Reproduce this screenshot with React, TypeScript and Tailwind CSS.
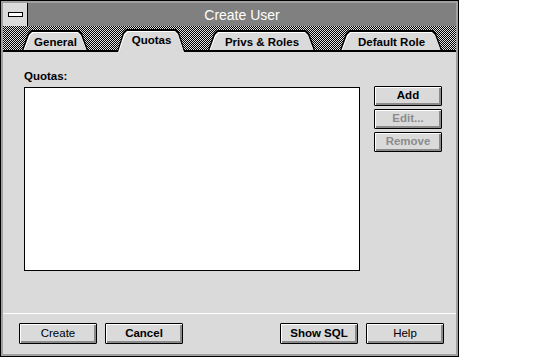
import React from "react";

const font = "[font-family:'Liberation_Sans',Arial,sans-serif]";

function Tab({ label, active = false, className = "" }: { label: string; active?: boolean; className?: string }) {
  // чёрный контур -> белая подсветка -> серая заливка, все три обрезаны трапецией
  return (
    <div
      className={`${active ? "h-[23px] -mb-[2px] z-10" : "h-[20px]"} relative flex flex-col bg-black px-[1px] pt-[2px] [clip-path:polygon(0_100%,6px_3px,9px_0,calc(100%_-_9px)_0,calc(100%_-_6px)_3px,100%_100%)] ${className}`}
    >
      <div className="flex flex-1 flex-col bg-white pl-[1px] pt-[1px] [clip-path:polygon(0_100%,6px_3px,9px_0,calc(100%_-_9px)_0,calc(100%_-_6px)_3px,100%_100%)]">
        <div
          className={`flex flex-1 items-center justify-center bg-[#dadada] text-[11.5px] font-bold text-black [clip-path:polygon(0_100%,6px_3px,9px_0,calc(100%_-_9px)_0,calc(100%_-_6px)_3px,100%_100%)] ${active ? "pb-[3px]" : "pt-[1px]"}`}
        >
          {label}
        </div>
      </div>
    </div>
  );
}

function Btn({ label, disabled = false, className = "" }: { label: string; disabled?: boolean; className?: string }) {
  return (
    <div
      className={`flex items-center justify-center rounded-[1px] border border-black bg-[#dadada] text-[11.5px] font-bold shadow-[inset_1px_1px_0_#fff,inset_-2px_-2px_0_#8a8a8a] ${disabled ? "text-[#8c8c8c]" : "text-black"} ${className}`}
    >
      {label}
    </div>
  );
}

export default function App() {
  return (
    <div className={`h-[361px] w-[536px] bg-white ${font}`}>
      <div className="flex h-[357px] w-[459px] flex-col border border-black bg-[#a0a0a0] p-[2px]">
        {/* Заголовок окна */}
        <div className="flex h-[23px] bg-[#808080]">
          <div className="flex w-[25px] items-center justify-center border-r border-black bg-[#dadada]">
            <div className="h-[5px] w-[15px] border border-black bg-white" />
          </div>
          <div className="flex flex-1 items-center justify-center pt-[2px] text-[14px] text-white">Create User</div>
        </div>

        {/* Полоса вкладок, фон — дизеринг 1px */}
        <div className="flex h-[26px] items-end border-b-2 border-black bg-[#e0e0e0] bg-[url('data:image/svg+xml,%3Csvg%20xmlns=%22http://www.w3.org/2000/svg%22%20width=%222%22%20height=%222%22%3E%3Crect%20width=%222%22%20height=%222%22%20fill=%22%23e0e0e0%22/%3E%3Crect%20width=%221%22%20height=%221%22/%3E%3Crect%20x=%221%22%20y=%221%22%20width=%221%22%20height=%221%22/%3E%3C/svg%3E')]">
          <Tab label="General" className="ml-[19px] w-[66px]" />
          <Tab label="Quotas" active className="ml-[29px] w-[68px]" />
          <Tab label="Privs & Roles" className="ml-[23px] w-[107px]" />
          <Tab label="Default Role" className="ml-[25px] w-[102px]" />
        </div>

        {/* Тело диалога */}
        <div className="flex flex-1 flex-col bg-[#dadada]">
          <div className="flex pl-[21px] pt-[18px]">
            <div className="flex flex-col">
              <div className="h-[13px] text-[11.5px] font-bold leading-[13px] text-black">Quotas:</div>
              <div className="mt-[4px] h-[184px] w-[336px] border border-black bg-white" />
            </div>
            <div className="ml-[14px] mt-[16px] flex w-[68px] flex-col gap-[3px]">
              <Btn label="Add" className="h-[20px]" />
              <Btn label="Edit..." disabled className="h-[20px]" />
              <Btn label="Remove" disabled className="h-[20px]" />
            </div>
          </div>

          <div className="mt-auto h-[1px] bg-white" />
          <div className="flex justify-between pb-[10px] pl-[16px] pr-[12px] pt-[9px]">
            <div className="flex gap-[8px]">
              <Btn label="Create" className="h-[21px] w-[78px] !font-normal" />
              <Btn label="Cancel" className="h-[21px] w-[78px]" />
            </div>
            <div className="flex gap-[8px]">
              <Btn label="Show SQL" className="h-[21px] w-[78px]" />
              <Btn label="Help" className="h-[21px] w-[78px] !font-normal" />
            </div>
          </div>
        </div>
      </div>
    </div>
  );
}
